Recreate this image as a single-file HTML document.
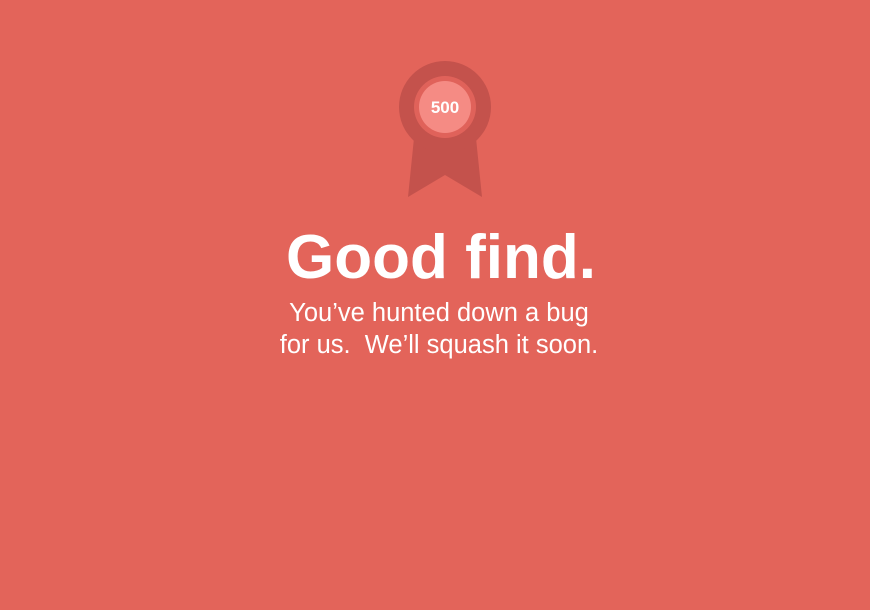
<!DOCTYPE html>
<html><head><style>
html,body{margin:0;padding:0;}
body{width:870px;height:610px;background:#e3645a;font-family:"Liberation Sans",sans-serif;color:#fff;position:relative;overflow:hidden;}
h1{position:absolute;left:0;width:870px;top:218px;margin:0;text-align:center;font-size:62px;font-weight:bold;line-height:80px;letter-spacing:0px;padding-left:12px;box-sizing:border-box;}
p{position:absolute;left:0;width:870px;top:297px;margin:0;text-align:center;font-size:25.5px;line-height:32px;padding-left:8px;box-sizing:border-box;}
</style></head><body>
<svg width="870" height="210" style="position:absolute;left:0;top:0">
<polygon points="414,138 476,138 482,197 445,175 408,197" fill="#c4524c"/>
<circle cx="445" cy="107" r="46" fill="#c4524c"/>
<circle cx="445" cy="107" r="31" fill="#e0625a"/>
<circle cx="445" cy="107" r="26" fill="#f58b84"/>
<text x="445" y="113" text-anchor="middle" font-family="Liberation Sans" font-weight="bold" font-size="17" fill="#fff">500</text>
</svg>
<h1>Good find.</h1>
<p>You’ve hunted down a bug<br>for us.&nbsp; We’ll squash it soon.</p>
</body></html>
